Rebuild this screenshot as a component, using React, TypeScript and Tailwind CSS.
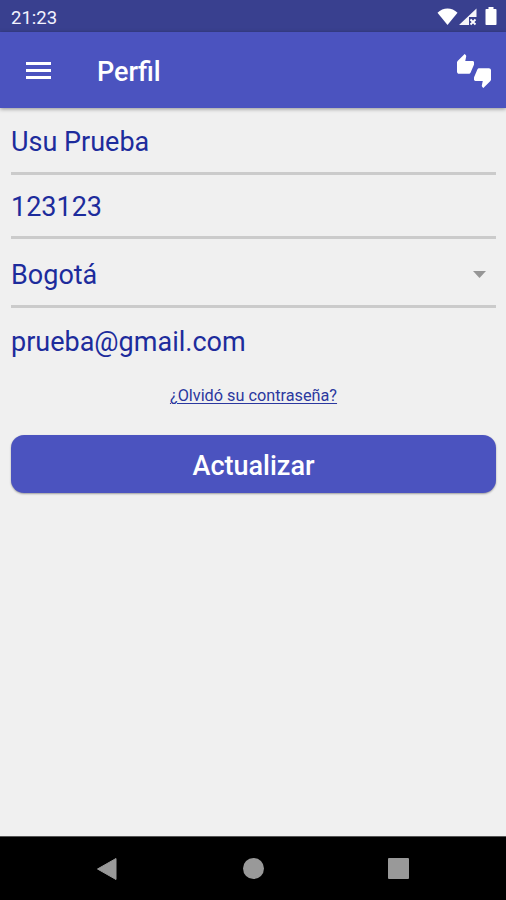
import type { ReactNode } from "react";

function StatusBar() {
  return (
    <div className="flex h-8 shrink-0 items-center justify-between bg-[#39408f] pl-[11px] pr-[9px] text-[#f3f3ff]">
      <span className="pt-[3px] text-[18.5px] leading-8">21:23</span>
      <svg width="60" height="20" viewBox="0 0 60 20" className="mt-px" fill="#fff" aria-hidden="true">
        <path d="M0.5 5.8C6-.1 15-.1 20.500 5.800L10.500 18Z" />
        <path d="M39.500 1.500V10H32V18H22Z" fillOpacity="0.95" />
        <path d="M33.500 12.500l5 5m0-5l-5 5" stroke="#fff" strokeWidth="1.8" />
        <path d="M51.500 0h5v2h2.200q.8 0 .8.800v14.400q0 .8-.8.800h-9.400q-.8 0-.8-.8V2.800q0-.8.8-.8h2.200z" />
      </svg>
    </div>
  );
}

function AppBar() {
  return (
    <header className="relative flex h-[76px] shrink-0 items-center bg-[#4b53bf] pl-[26px] pr-[15px] text-white shadow-[0_1px_4px_rgba(0,0,0,0.4)]">
      <button className="flex w-[25px] flex-col gap-[4px]" aria-label="Menu">
        <span className="h-[3px] w-full bg-white" />
        <span className="h-[3px] w-full bg-white" />
        <span className="h-[3px] w-full bg-white" />
      </button>
      <h1 className="ml-[46px] flex-1 pt-[3px] text-[27px] font-medium leading-8">Perfil</h1>
      <svg width="34" height="34" viewBox="0 0 24 24" className="mt-px" fill="#fff" aria-hidden="true">
        <path d="M12 6c0-.55-.45-1-1-1H5.820l.66-3.180.02-.23c0-.31-.13-.59-.33-.8L5.380 0 .44 4.940C.17 5.210 0 5.590 0 6v6.500c0 .83.67 1.500 1.500 1.500h6.750c.62 0 1.150-.38 1.380-.91l2.260-5.290c.07-.17.11-.36.11-.55V6zm10.500 4h-6.750c-.62 0-1.150.38-1.380.91l-2.260 5.290c-.07.17-.11.36-.11.55V18c0 .55.45 1 1 1h5.180l-.66 3.180-.02.24c0 .31.13.59.33.8l.79.78 4.940-4.940c.27-.27.44-.65.44-1.060v-6.500c0-.83-.67-1.500-1.500-1.500z" />
      </svg>
    </header>
  );
}

function Field({ className, children }: { className: string; children: ReactNode }) {
  return (
    <div className={`flex items-center text-[27px] leading-8 text-[#1d2c9c] ${className}`}>
      {children}
    </div>
  );
}

function NavigationBar() {
  return (
    <nav className="flex h-16 shrink-0 items-center justify-between border-t border-[#555] bg-black pl-[96px] pr-[97px]">
      <svg width="21" height="24" viewBox="0 0 21 24" aria-hidden="true">
        <path d="M1.500 12L20 1.500V22.500Z" fill="#999" stroke="#999" strokeWidth="1" strokeLinejoin="round" />
      </svg>
      <span className="ml-px size-[21px] rounded-full bg-[#999]" />
      <span className="size-[21px] rounded-[1px] bg-[#999]" />
    </nav>
  );
}

export default function App() {
  return (
    <div className="flex h-[900px] w-[506px] flex-col bg-[#f0f0f0] font-['Roboto',sans-serif]">
      <StatusBar />
      <AppBar />
      <main className="flex flex-1 flex-col pl-[11px] pr-[10px]">
        <Field className="h-[67px] border-b-3 border-[#cbcbcb] pt-1">Usu Prueba</Field>
        <Field className="h-16 border-b-3 border-[#cbcbcb] pt-[2px]">123123</Field>
        <Field className="h-[69px] justify-between border-b-3 border-[#cbcbcb] pt-[5px] pr-[10px]">
          <span>Bogotá</span>
          <svg width="13" height="8" viewBox="0 0 13 8" aria-hidden="true">
            <path d="M0 0H13L6.500 7Z" fill="#969696" />
          </svg>
        </Field>
        <Field className="h-[66px] pt-[2px]">prueba@gmail.com</Field>
        <a className="mt-[10px] text-center text-[16.250px] leading-6 text-[#2b389f] underline decoration-1 underline-offset-2">
          ¿Olvidó su contraseña?
        </a>
        <button className="mt-[27px] h-[58px] w-full rounded-[13px] bg-[#4b53bf] pt-[3px] text-[27px] font-medium leading-8 text-white shadow-[0_1px_2px_rgba(0,0,0,0.35)]">
          Actualizar
        </button>
      </main>
      <NavigationBar />
    </div>
  );
}
